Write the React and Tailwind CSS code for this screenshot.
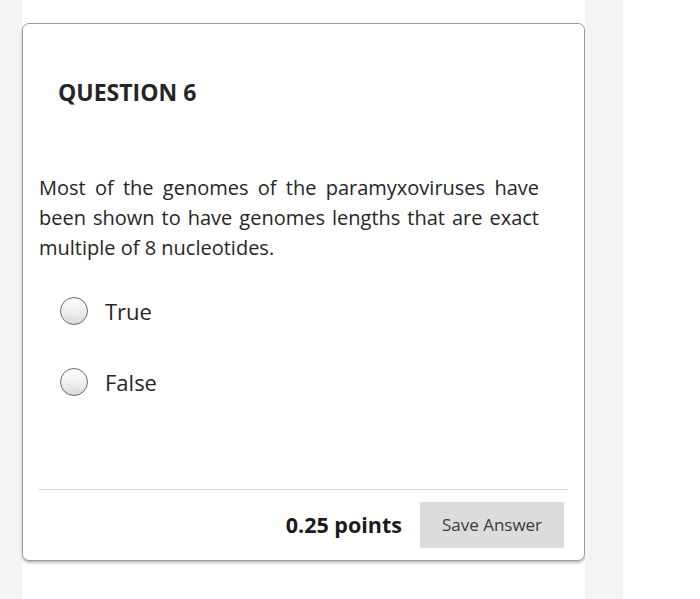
import React from "react";

function Radio() {
  return (
    <span className="block w-[28px] h-[28px] rounded-full border-[1.5px] border-[#6b6b6b] bg-[linear-gradient(180deg,#fdfdfd_0%,#f0f0f0_50%,#d9d9d9_100%)] shrink-0" />
  );
}

export default function App() {
  return (
    <div
      className="w-[700px] h-[599px] bg-white flex overflow-hidden"
      style={{ fontFamily: '"Open Sans", "Liberation Sans", sans-serif' }}
    >
      <div className="w-[22px] bg-[#f4f4f4] shrink-0" />
      <div className="w-[563px] shrink-0 pt-[23px]">
        <div className="h-[538px] border border-[#9c9c9c] rounded-[7px] shadow-[0_2px_3px_rgba(0,0,0,0.25)] bg-white flex flex-col">
          <h2 className="pl-[35px] pt-[53px] text-[23px] leading-[30px] font-bold text-[#262626]">
            QUESTION 6
          </h2>
          <p className="mt-[66px] pl-[16px] pr-[45px] text-[20px] leading-[30px] text-[#262626] text-justify">
            Most of the genomes of the paramyxoviruses have been shown to have genomes lengths that are exact multiple of 8 nucleotides.
          </p>
          <div className="mt-[34px] pl-[37px] flex flex-col gap-[43px]">
            <label className="flex items-center gap-[17px] text-[22px] leading-[28px] text-[#262626]">
              <Radio />
              <span>True</span>
            </label>
            <label className="flex items-center gap-[17px] text-[22px] leading-[28px] text-[#262626]">
              <Radio />
              <span>False</span>
            </label>
          </div>
          <div className="mt-auto mx-[16px] border-t border-[#cfcfcf] mb-[12px]" />
          <div className="flex items-center justify-end pr-[20px] pb-[12px] gap-[18px]">
            <span className="text-[21.5px] font-bold text-[#1a1a1a]">0.25 points</span>
            <button className="w-[144px] h-[46px] bg-[#dcdcdc] rounded-[2px] text-[17px] text-[#3a3a3a]">
              Save Answer
            </button>
          </div>
        </div>
      </div>
      <div className="w-[38px] bg-[#f4f4f4] shrink-0" />
      <div className="flex-1 bg-white" />
    </div>
  );
}
